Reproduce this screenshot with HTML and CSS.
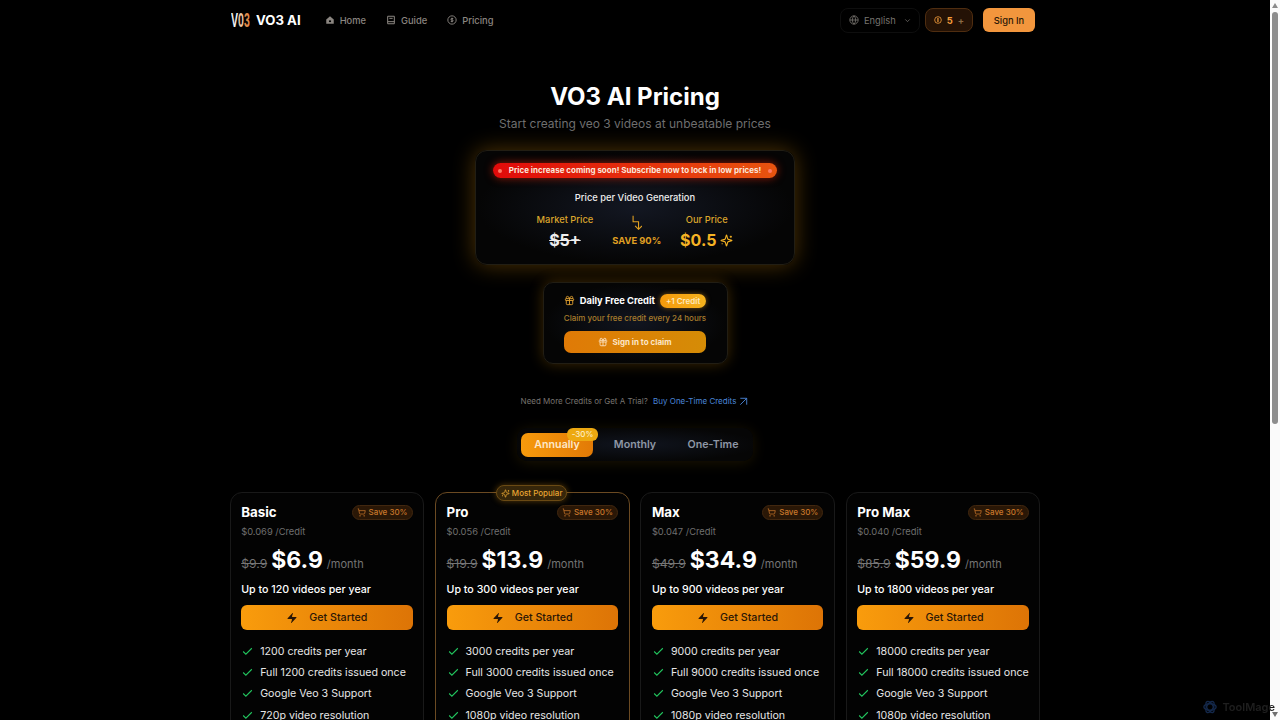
FILE: index.html
```html
<!DOCTYPE html>
<html lang="en">

<head>
    <meta charset="UTF-8">
    <meta name="viewport" content="width=device-width, initial-scale=1.0">
    <title>VO3 AI Pricing</title>
    <link rel="stylesheet" href="styles.css">
</head>

<body>
    <div class="viewport">
        <header class="topbar">
            <div class="brand">
                <span class="brand-mark">V<span class="mark-zero">0</span><span class="mark-three">3</span></span>
                <span class="brand-name">VO3 AI</span>
            </div>
            <nav class="nav">
                <a class="nav-link">
                    <svg class="nav-icon" viewBox="0 0 24 24"><path d="M3 11 12 3l9 8v10H3z" fill="currentColor"/><rect x="9.500" y="13" width="5" height="4" fill="#000"/></svg>
                    Home
                </a>
                <a class="nav-link">
                    <svg class="nav-icon" viewBox="0 0 24 24" fill="none" stroke="currentColor" stroke-width="2.400"><path d="M4 21V3h16v18zM4 16h16M8 8h8"/></svg>
                    Guide
                </a>
                <a class="nav-link">
                    <svg class="nav-icon" viewBox="0 0 24 24" fill="none" stroke="currentColor" stroke-width="2.200"><circle cx="12" cy="12" r="10"/><path d="M15 8.500h-4a1.700 1.700 0 0 0 0 3.500h2a1.700 1.700 0 0 1 0 3.500H9M12 6.500v11"/></svg>
                    Pricing
                </a>
            </nav>
            <div class="topbar-right">
                <div class="lang">
                    <svg class="lang-icon" viewBox="0 0 24 24" fill="none" stroke="currentColor" stroke-width="2"><circle cx="12" cy="12" r="10"/><path d="M12 2a14.500 14.500 0 0 0 0 20 14.500 14.500 0 0 0 0-20M2 12h20"/></svg>
                    <span>English</span>
                    <svg class="lang-caret" viewBox="0 0 24 24" fill="none" stroke="currentColor" stroke-width="2"><path d="m6 9 6 6 6-6"/></svg>
                </div>
                <div class="credits">
                    <svg class="credits-icon" viewBox="0 0 24 24" fill="none" stroke="currentColor" stroke-width="2.400"><circle cx="12" cy="12" r="10"/><path d="M12 6v12M9 9h5M9 15h5"/></svg>
                    <span class="credits-num">5</span>
                    <span class="credits-plus">+</span>
                </div>
                <button class="signin">Sign In</button>
            </div>
        </header>

        <main class="page">
            <h1 class="title">VO3 AI Pricing</h1>
            <p class="subtitle">Start creating veo 3 videos at unbeatable prices</p>

            <section class="promo">
                <div class="alert">
                    <span class="alert-dot"></span>
                    <span>Price increase coming soon! Subscribe now to lock in low prices!</span>
                    <span class="alert-dot"></span>
                </div>
                <div class="promo-title">Price per Video Generation</div>
                <div class="compare">
                    <div class="compare-col">
                        <div class="compare-label">Market Price</div>
                        <div class="old-price">$5+</div>
                    </div>
                    <div class="compare-mid">
                        <svg class="save-arrow" viewBox="0 0 16 22" fill="none" stroke="currentColor" stroke-width="1.600"><path d="M3 1v9h8v11M6 16l5 5 5-5"/></svg>
                        <div class="save-text">SAVE 90%</div>
                    </div>
                    <div class="compare-col">
                        <div class="compare-label">Our Price</div>
                        <div class="our-price">$0.5
                            <svg class="sparkle" viewBox="0 0 24 24" fill="none" stroke="currentColor" stroke-width="2"><path d="M9.937 15.500A2 2 0 0 0 8.500 14.063l-6.135-1.582a.5.5 0 0 1 0-.962L8.500 9.936A2 2 0 0 0 9.937 8.500l1.582-6.135a.5.5 0 0 1 .963 0L14.063 8.500A2 2 0 0 0 15.500 9.937l6.135 1.581a.5.5 0 0 1 0 .964L15.500 14.063a2 2 0 0 0-1.437 1.437l-1.582 6.135a.5.5 0 0 1-.963 0zM20 3v4M22 5h-4M4 17v2M5 18H3"/></svg>
                        </div>
                    </div>
                </div>
            </section>

            <section class="daily">
                <div class="daily-head">
                    <svg class="gift" viewBox="0 0 24 24" fill="none" stroke="currentColor" stroke-width="2"><rect x="3" y="8" width="18" height="4" rx="1"/><path d="M12 8v13M19 12v7a2 2 0 0 1-2 2H7a2 2 0 0 1-2-2v-7M7.500 8a2.500 2.500 0 0 1 0-5A4.800 8 0 0 1 12 8a4.800 8 0 0 1 4.500-5 2.500 2.500 0 0 1 0 5"/></svg>
                    <span class="daily-title">Daily Free Credit</span>
                    <span class="daily-badge">+1 Credit</span>
                </div>
                <div class="daily-sub">Claim your free credit every 24 hours</div>
                <button class="claim">
                    <svg class="gift-small" viewBox="0 0 24 24" fill="none" stroke="currentColor" stroke-width="2"><rect x="3" y="8" width="18" height="4" rx="1"/><path d="M12 8v13M19 12v7a2 2 0 0 1-2 2H7a2 2 0 0 1-2-2v-7M7.500 8a2.500 2.500 0 0 1 0-5A4.800 8 0 0 1 12 8a4.800 8 0 0 1 4.500-5 2.500 2.500 0 0 1 0 5"/></svg>
                    Sign in to claim
                </button>
            </section>

            <p class="more">Need More Credits or Get A Trial? <a class="more-link">Buy One-Time Credits<svg class="more-arrow" viewBox="0 0 24 24" fill="none" stroke="currentColor" stroke-width="2"><path d="M5 5h14v14M5 19 19 5"/></svg></a></p>

            <div class="tabs">
                <div class="tab tab-active">Annually<span class="tab-badge">-30%</span></div>
                <div class="tab">Monthly</div>
                <div class="tab">One-Time</div>
            </div>

            <section class="plans">
                <article class="plan">
                    <div class="plan-head">
                        <h2 class="plan-name">Basic</h2>
                        <span class="save"><svg class="cart" viewBox="0 0 24 24" fill="none" stroke="currentColor" stroke-width="2"><circle cx="8" cy="21" r="1"/><circle cx="19" cy="21" r="1"/><path d="M2.050 2.050h2l2.660 12.420a2 2 0 0 0 2 1.580h9.780a2 2 0 0 0 1.950-1.570l1.650-7.430H5.120"/></svg>Save 30%</span>
                    </div>
                    <div class="per-credit">$0.069 /Credit</div>
                    <div class="price-row"><s class="price-old">$9.9</s><span class="price">$6.9</span><span class="per">/month</span></div>
                    <div class="videos">Up to 120 videos per year</div>
                    <button class="start"><svg class="bolt" viewBox="0 0 24 24"><path d="M4 14a1 1 0 0 1-.78-1.630l9.900-10.200a.5.5 0 0 1 .86.460l-1.920 6.020A1 1 0 0 0 13 10h7a1 1 0 0 1 .78 1.630l-9.900 10.200a.5.5 0 0 1-.86-.460l1.920-6.020A1 1 0 0 0 11 14z" fill="currentColor"/></svg>Get Started</button>
                    <ul class="features">
                        <li><svg class="check" viewBox="0 0 24 24" fill="none" stroke="currentColor" stroke-width="2"><path d="M20 6 9 17l-5-5"/></svg>1200 credits per year</li>
                        <li><svg class="check" viewBox="0 0 24 24" fill="none" stroke="currentColor" stroke-width="2"><path d="M20 6 9 17l-5-5"/></svg>Full 1200 credits issued once</li>
                        <li><svg class="check" viewBox="0 0 24 24" fill="none" stroke="currentColor" stroke-width="2"><path d="M20 6 9 17l-5-5"/></svg>Google Veo 3 Support</li>
                        <li><svg class="check" viewBox="0 0 24 24" fill="none" stroke="currentColor" stroke-width="2"><path d="M20 6 9 17l-5-5"/></svg>720p video resolution</li>
                    </ul>
                </article>

                <article class="plan plan-popular">
                    <span class="popular"><svg class="popular-icon" viewBox="0 0 24 24" fill="none" stroke="currentColor" stroke-width="2"><path d="M9.937 15.500A2 2 0 0 0 8.500 14.063l-6.135-1.582a.5.5 0 0 1 0-.962L8.500 9.936A2 2 0 0 0 9.937 8.500l1.582-6.135a.5.5 0 0 1 .963 0L14.063 8.500A2 2 0 0 0 15.500 9.937l6.135 1.581a.5.5 0 0 1 0 .964L15.500 14.063a2 2 0 0 0-1.437 1.437l-1.582 6.135a.5.5 0 0 1-.963 0zM20 3v4M22 5h-4M4 17v2M5 18H3"/></svg>Most Popular</span>
                    <div class="plan-head">
                        <h2 class="plan-name">Pro</h2>
                        <span class="save"><svg class="cart" viewBox="0 0 24 24" fill="none" stroke="currentColor" stroke-width="2"><circle cx="8" cy="21" r="1"/><circle cx="19" cy="21" r="1"/><path d="M2.050 2.050h2l2.660 12.420a2 2 0 0 0 2 1.580h9.780a2 2 0 0 0 1.950-1.570l1.650-7.430H5.120"/></svg>Save 30%</span>
                    </div>
                    <div class="per-credit">$0.056 /Credit</div>
                    <div class="price-row"><s class="price-old">$19.9</s><span class="price">$13.9</span><span class="per">/month</span></div>
                    <div class="videos">Up to 300 videos per year</div>
                    <button class="start"><svg class="bolt" viewBox="0 0 24 24"><path d="M4 14a1 1 0 0 1-.78-1.630l9.900-10.200a.5.5 0 0 1 .86.460l-1.920 6.020A1 1 0 0 0 13 10h7a1 1 0 0 1 .78 1.630l-9.900 10.200a.5.5 0 0 1-.86-.460l1.920-6.020A1 1 0 0 0 11 14z" fill="currentColor"/></svg>Get Started</button>
                    <ul class="features">
                        <li><svg class="check" viewBox="0 0 24 24" fill="none" stroke="currentColor" stroke-width="2"><path d="M20 6 9 17l-5-5"/></svg>3000 credits per year</li>
                        <li><svg class="check" viewBox="0 0 24 24" fill="none" stroke="currentColor" stroke-width="2"><path d="M20 6 9 17l-5-5"/></svg>Full 3000 credits issued once</li>
                        <li><svg class="check" viewBox="0 0 24 24" fill="none" stroke="currentColor" stroke-width="2"><path d="M20 6 9 17l-5-5"/></svg>Google Veo 3 Support</li>
                        <li><svg class="check" viewBox="0 0 24 24" fill="none" stroke="currentColor" stroke-width="2"><path d="M20 6 9 17l-5-5"/></svg>1080p video resolution</li>
                    </ul>
                </article>

                <article class="plan">
                    <div class="plan-head">
                        <h2 class="plan-name">Max</h2>
                        <span class="save"><svg class="cart" viewBox="0 0 24 24" fill="none" stroke="currentColor" stroke-width="2"><circle cx="8" cy="21" r="1"/><circle cx="19" cy="21" r="1"/><path d="M2.050 2.050h2l2.660 12.420a2 2 0 0 0 2 1.580h9.780a2 2 0 0 0 1.950-1.570l1.650-7.430H5.120"/></svg>Save 30%</span>
                    </div>
                    <div class="per-credit">$0.047 /Credit</div>
                    <div class="price-row"><s class="price-old">$49.9</s><span class="price">$34.9</span><span class="per">/month</span></div>
                    <div class="videos">Up to 900 videos per year</div>
                    <button class="start"><svg class="bolt" viewBox="0 0 24 24"><path d="M4 14a1 1 0 0 1-.78-1.630l9.900-10.200a.5.5 0 0 1 .86.460l-1.920 6.020A1 1 0 0 0 13 10h7a1 1 0 0 1 .78 1.630l-9.900 10.200a.5.5 0 0 1-.86-.460l1.920-6.020A1 1 0 0 0 11 14z" fill="currentColor"/></svg>Get Started</button>
                    <ul class="features">
                        <li><svg class="check" viewBox="0 0 24 24" fill="none" stroke="currentColor" stroke-width="2"><path d="M20 6 9 17l-5-5"/></svg>9000 credits per year</li>
                        <li><svg class="check" viewBox="0 0 24 24" fill="none" stroke="currentColor" stroke-width="2"><path d="M20 6 9 17l-5-5"/></svg>Full 9000 credits issued once</li>
                        <li><svg class="check" viewBox="0 0 24 24" fill="none" stroke="currentColor" stroke-width="2"><path d="M20 6 9 17l-5-5"/></svg>Google Veo 3 Support</li>
                        <li><svg class="check" viewBox="0 0 24 24" fill="none" stroke="currentColor" stroke-width="2"><path d="M20 6 9 17l-5-5"/></svg>1080p video resolution</li>
                    </ul>
                </article>

                <article class="plan">
                    <div class="plan-head">
                        <h2 class="plan-name">Pro Max</h2>
                        <span class="save"><svg class="cart" viewBox="0 0 24 24" fill="none" stroke="currentColor" stroke-width="2"><circle cx="8" cy="21" r="1"/><circle cx="19" cy="21" r="1"/><path d="M2.050 2.050h2l2.660 12.420a2 2 0 0 0 2 1.580h9.780a2 2 0 0 0 1.950-1.570l1.650-7.430H5.120"/></svg>Save 30%</span>
                    </div>
                    <div class="per-credit">$0.040 /Credit</div>
                    <div class="price-row"><s class="price-old">$85.9</s><span class="price">$59.9</span><span class="per">/month</span></div>
                    <div class="videos">Up to 1800 videos per year</div>
                    <button class="start"><svg class="bolt" viewBox="0 0 24 24"><path d="M4 14a1 1 0 0 1-.78-1.630l9.900-10.200a.5.5 0 0 1 .86.460l-1.920 6.020A1 1 0 0 0 13 10h7a1 1 0 0 1 .78 1.630l-9.900 10.200a.5.5 0 0 1-.86-.460l1.920-6.020A1 1 0 0 0 11 14z" fill="currentColor"/></svg>Get Started</button>
                    <ul class="features">
                        <li><svg class="check" viewBox="0 0 24 24" fill="none" stroke="currentColor" stroke-width="2"><path d="M20 6 9 17l-5-5"/></svg>18000 credits per year</li>
                        <li><svg class="check" viewBox="0 0 24 24" fill="none" stroke="currentColor" stroke-width="2"><path d="M20 6 9 17l-5-5"/></svg>Full 18000 credits issued once</li>
                        <li><svg class="check" viewBox="0 0 24 24" fill="none" stroke="currentColor" stroke-width="2"><path d="M20 6 9 17l-5-5"/></svg>Google Veo 3 Support</li>
                        <li><svg class="check" viewBox="0 0 24 24" fill="none" stroke="currentColor" stroke-width="2"><path d="M20 6 9 17l-5-5"/></svg>1080p video resolution</li>
                    </ul>
                </article>
            </section>
        </main>
    </div>

    <div class="scrollbar">
        <span class="scroll-up"></span>
        <span class="scroll-thumb"></span>
        <span class="scroll-down"></span>
    </div>

    <div class="watermark">
        <svg class="watermark-icon" viewBox="0 0 24 24" fill="none" stroke="currentColor" stroke-width="2.400"><ellipse cx="12" cy="12" rx="10.500" ry="5.500"/><ellipse cx="12" cy="12" rx="10.500" ry="5.500" transform="rotate(60 12 12)"/><ellipse cx="12" cy="12" rx="10.500" ry="5.500" transform="rotate(120 12 12)"/></svg>
        ToolMage
    </div>
</body>

</html>
```

FILE: styles.css
```css
body {
    margin: 0;
    height: 100vh;
    display: flex;
    overflow: hidden;
    background: #000;
    color: #fff;
    font-family: Inter, "Liberation Sans", sans-serif;
}

button {
    font-family: inherit;
    border: none;
}

.viewport {
    flex: 1;
    min-width: 0;
    overflow: hidden;
}

/* Browser scrollbar from the capture */
.scrollbar {
    width: 10px;
    display: flex;
    flex-direction: column;
    align-items: center;
    background: #fafafa;
}

.scroll-up {
    margin-top: 3px;
    border: 3px solid transparent;
    border-top: none;
    border-bottom: 5px solid #8a8a8a;
}

.scroll-thumb {
    width: 6px;
    height: 412px;
    margin-top: 4px;
    border-radius: 3px;
    background: #8c8c8c;
}

.scroll-down {
    margin-top: auto;
    margin-bottom: 3px;
    border: 3px solid transparent;
    border-bottom: none;
    border-top: 5px solid #6e6e6e;
}

/* Top bar */
.topbar {
    display: flex;
    align-items: center;
    width: 810px;
    height: 40px;
    margin: 0 auto;
    box-sizing: border-box;
    padding: 0 5px 0 1px;
}

.brand {
    display: flex;
    align-items: center;
    gap: 7px;
}

.brand-mark {
    display: inline-block;
    width: 18px;
    font-family: "Liberation Sans", sans-serif;
    font-size: 19.500px;
    line-height: 20px;
    font-weight: 700;
    color: #f2f2f2;
    transform: scaleX(0.54);
    transform-origin: left center;
    white-space: nowrap;
}

.mark-zero {
    color: #eec4a0;
}

.mark-three {
    color: #e08a4a;
}

.brand-name {
    font-size: 13.200px;
    font-weight: 700;
}

.nav {
    display: flex;
    gap: 20px;
    margin-left: 24px;
}

.nav-link {
    display: flex;
    align-items: center;
    gap: 5px;
    font-size: 9.330px;
    font-weight: 500;
    color: #8b8681;
}

.nav-icon {
    width: 10px;
    height: 10px;
}

.topbar-right {
    display: flex;
    align-items: center;
    margin-left: auto;
}

.lang {
    display: flex;
    align-items: center;
    gap: 5px;
    height: 23px;
    padding: 0 7px 0 8px;
    border: 1px solid #0e0e0e;
    border-radius: 8px;
    font-size: 9.330px;
    color: #77736f;
}

.lang-icon {
    width: 10px;
    height: 10px;
}

.lang-caret {
    width: 9px;
    height: 9px;
    margin-left: 2px;
}

.credits {
    display: flex;
    align-items: center;
    gap: 5px;
    height: 22px;
    margin-left: 5px;
    padding: 0 8px;
    border: 1px solid #4f2d10;
    border-radius: 8px;
    background: #241205;
    font-size: 9.330px;
    font-weight: 700;
    color: #f59e3c;
}

.credits-icon {
    width: 8px;
    height: 8px;
}

.credits-plus {
    color: #8a6a45;
}

.signin {
    width: 52px;
    height: 24px;
    margin-left: 10px;
    border-radius: 6px;
    background: #f2963d;
    color: #2a1606;
    font-size: 9.330px;
    font-weight: 500;
}

/* Heading */
.page {
    width: 810px;
    margin: 0 auto;
    display: flex;
    flex-direction: column;
    align-items: center;
}

.title {
    margin: 39px 0 0;
    font-size: 24px;
    line-height: 36px;
    font-weight: 700;
}

.subtitle {
    margin: -1px 0 0;
    font-size: 12px;
    line-height: 20px;
    color: #6f6f6f;
}

/* Price comparison card */
.promo {
    width: 320px;
    height: 115px;
    margin-top: 16px;
    box-sizing: border-box;
    padding-top: 12px;
    border: 1px solid #221e14;
    border-radius: 12px;
    background: radial-gradient(ellipse at center, #131722, #050505 70%);
    box-shadow: 0 0 22px rgba(190, 125, 10, 0.42);
    display: flex;
    flex-direction: column;
    align-items: center;
}

.alert {
    display: flex;
    align-items: center;
    justify-content: center;
    gap: 4px;
    width: 284px;
    height: 15px;
    border-radius: 8px;
    background: linear-gradient(90deg, #e10a0a, #e8540f);
    box-shadow: 0 0 8px rgba(240, 40, 10, 0.6);
    font-size: 8px;
    line-height: 13px;
    font-weight: 700;
    color: #fbe7dc;
    white-space: nowrap;
}

.alert-dot {
    width: 4px;
    height: 4px;
    margin: 0 3px;
    border-radius: 50%;
    background: #ff7a66;
}

.promo-title {
    margin-top: 13px;
    font-size: 9.330px;
    line-height: 14px;
    font-weight: 500;
    color: #eee;
}

.compare {
    display: flex;
    justify-content: center;
    gap: 19px;
    margin-top: 9px;
}

.compare-col {
    display: flex;
    flex-direction: column;
    align-items: center;
    gap: 3px;
}

.compare-label {
    font-size: 9.330px;
    line-height: 12px;
    font-weight: 500;
    color: #dba52c;
}

.old-price {
    font-size: 16px;
    line-height: 22px;
    font-weight: 700;
    color: #eee;
    text-decoration: line-through;
}

.our-price {
    display: flex;
    align-items: center;
    gap: 4px;
    font-size: 16px;
    line-height: 22px;
    font-weight: 700;
    color: #f5b324;
}

.sparkle {
    width: 13px;
    height: 13px;
}

.compare-mid {
    display: flex;
    flex-direction: column;
    align-items: center;
    color: #e0a022;
}

.save-arrow {
    width: 11px;
    height: 15px;
    margin-top: 1px;
}

.save-text {
    margin-top: 5px;
    font-size: 9.330px;
    line-height: 12px;
    font-weight: 700;
}

/* Daily credit card */
.daily {
    width: 185px;
    height: 82px;
    margin-top: 17px;
    box-sizing: border-box;
    padding-top: 10px;
    border: 1px solid #221e14;
    border-radius: 10px;
    background: radial-gradient(ellipse at center, #111520, #050505 70%);
    box-shadow: 0 0 14px rgba(190, 125, 10, 0.32);
    display: flex;
    flex-direction: column;
    align-items: center;
}

.daily-head {
    display: flex;
    align-items: center;
    height: 15px;
}

.gift {
    width: 11px;
    height: 11px;
    margin-right: 5px;
    color: #e0a030;
}

.daily-title {
    font-size: 9.330px;
    font-weight: 700;
}

.daily-badge {
    margin-left: 5px;
    padding: 0 6px;
    line-height: 14px;
    border-radius: 7px;
    background: linear-gradient(90deg, #f59a0b, #f5b21e);
    box-shadow: 0 0 5px rgba(245, 160, 20, 0.5);
    font-size: 8px;
    font-weight: 600;
    color: #fde9bd;
}

.daily-sub {
    margin-top: 4px;
    font-size: 8px;
    line-height: 12px;
    font-weight: 500;
    color: #a97d2c;
}

.claim {
    display: flex;
    align-items: center;
    justify-content: center;
    gap: 4px;
    width: 142px;
    height: 22px;
    margin-top: 7px;
    border-radius: 7px;
    background: linear-gradient(90deg, #e07a06, #d58c06);
    color: #fde6c8;
    font-size: 8px;
    font-weight: 700;
}

.gift-small {
    width: 10px;
    height: 10px;
}

/* One-time link and billing tabs */
.more {
    height: 12px;
    margin: 31px 0 0;
    font-size: 8px;
    line-height: 12px;
    color: #77736f;
}

.more-link {
    margin-left: 3px;
    color: #4a86d8;
}

.more-arrow {
    width: 11px;
    height: 11px;
    margin-left: 2px;
    vertical-align: -3px;
}

.tabs {
    display: flex;
    align-items: center;
    width: 236px;
    height: 33px;
    margin-top: 21px;
    box-sizing: border-box;
    padding: 0 4px;
    gap: 6px;
    border-radius: 10px;
    background: radial-gradient(ellipse at center, #10141e, #060606 75%);
    box-shadow: 0 2px 14px rgba(150, 110, 10, 0.18);
}

.tab {
    position: relative;
    width: 72px;
    text-align: center;
    font-size: 10.670px;
    line-height: 24px;
    font-weight: 600;
    color: #8e97a5;
}

.tab-active {
    border-radius: 7px;
    background: linear-gradient(90deg, #f79a0c, #e27a06);
    color: #fde8c8;
}

.tab-badge {
    position: absolute;
    top: -5px;
    right: -5px;
    width: 31px;
    line-height: 13px;
    border-radius: 6px;
    background: #eda911;
    color: #fdeec8;
    font-size: 8px;
    font-weight: 500;
}

/* Plan cards */
.plans {
    display: grid;
    grid-template-columns: repeat(4, 1fr);
    gap: 10.670px;
    width: 811px;
    flex-shrink: 0;
    margin-top: 31px;
}

.plan {
    position: relative;
    box-sizing: border-box;
    padding: 11px 10.670px 16px;
    border: 1px solid #191919;
    border-radius: 12px;
    background: #030303;
}

.plan-popular {
    border-color: #6b4a22;
}

.popular {
    position: absolute;
    top: -8px;
    left: 60px;
    display: flex;
    align-items: center;
    gap: 2px;
    height: 14px;
    padding: 0 4px;
    border: 1px solid #6a4a14;
    border-radius: 8px;
    background: #36260a;
    box-shadow: 0 0 6px rgba(240, 160, 20, 0.35);
    font-size: 8px;
    font-weight: 500;
    color: #e8a533;
    white-space: nowrap;
}

.popular-icon {
    width: 9px;
    height: 9px;
}

.plan-head {
    display: flex;
    align-items: center;
    justify-content: space-between;
}

.plan-name {
    margin: 0;
    font-size: 13.330px;
    line-height: 16px;
    font-weight: 700;
}

.save {
    display: flex;
    align-items: center;
    gap: 3px;
    height: 13px;
    padding: 0 4px;
    border: 1px solid #41270f;
    border-radius: 8px;
    background: #2a1706;
    font-size: 8px;
    font-weight: 500;
    color: #c9772b;
}

.cart {
    width: 9px;
    height: 9px;
}

.per-credit {
    margin-top: 5px;
    font-size: 9.330px;
    line-height: 13px;
    color: #6f6f6f;
}

.price-row {
    display: flex;
    align-items: baseline;
    margin-top: 7px;
}

.price-old {
    font-size: 12.200px;
    color: #757575;
}

.price {
    margin-left: 4px;
    font-size: 23px;
    line-height: 30px;
    font-weight: 700;
}

.per {
    margin-left: 4px;
    font-size: 11px;
    color: #757575;
}

.videos {
    margin-top: 7px;
    font-size: 10.670px;
    line-height: 16px;
    font-weight: 500;
}

.start {
    display: flex;
    align-items: center;
    justify-content: center;
    gap: 11px;
    width: 100%;
    height: 25px;
    margin-top: 7px;
    border-radius: 6px;
    background: linear-gradient(90deg, #f99c0c, #dd7406);
    color: #2a1606;
    font-size: 10.670px;
    font-weight: 500;
}

.bolt {
    width: 12px;
    height: 12px;
}

.features {
    margin: 10.500px 0 0;
    padding: 0;
    list-style: none;
}

.features li {
    display: flex;
    align-items: center;
    gap: 6px;
    height: 21.330px;
    font-size: 10.670px;
    color: #e6e6e6;
    white-space: nowrap;
}

.check {
    width: 13px;
    height: 13px;
    color: #22c55e;
}

/* Watermark */
.watermark {
    position: fixed;
    right: 5px;
    bottom: 6px;
    display: flex;
    align-items: center;
    gap: 5px;
    font-size: 11px;
    font-weight: 600;
    color: #1f1f1f;
    pointer-events: none;
}

.watermark-icon {
    width: 14px;
    height: 14px;
    color: #14284a;
}
```
